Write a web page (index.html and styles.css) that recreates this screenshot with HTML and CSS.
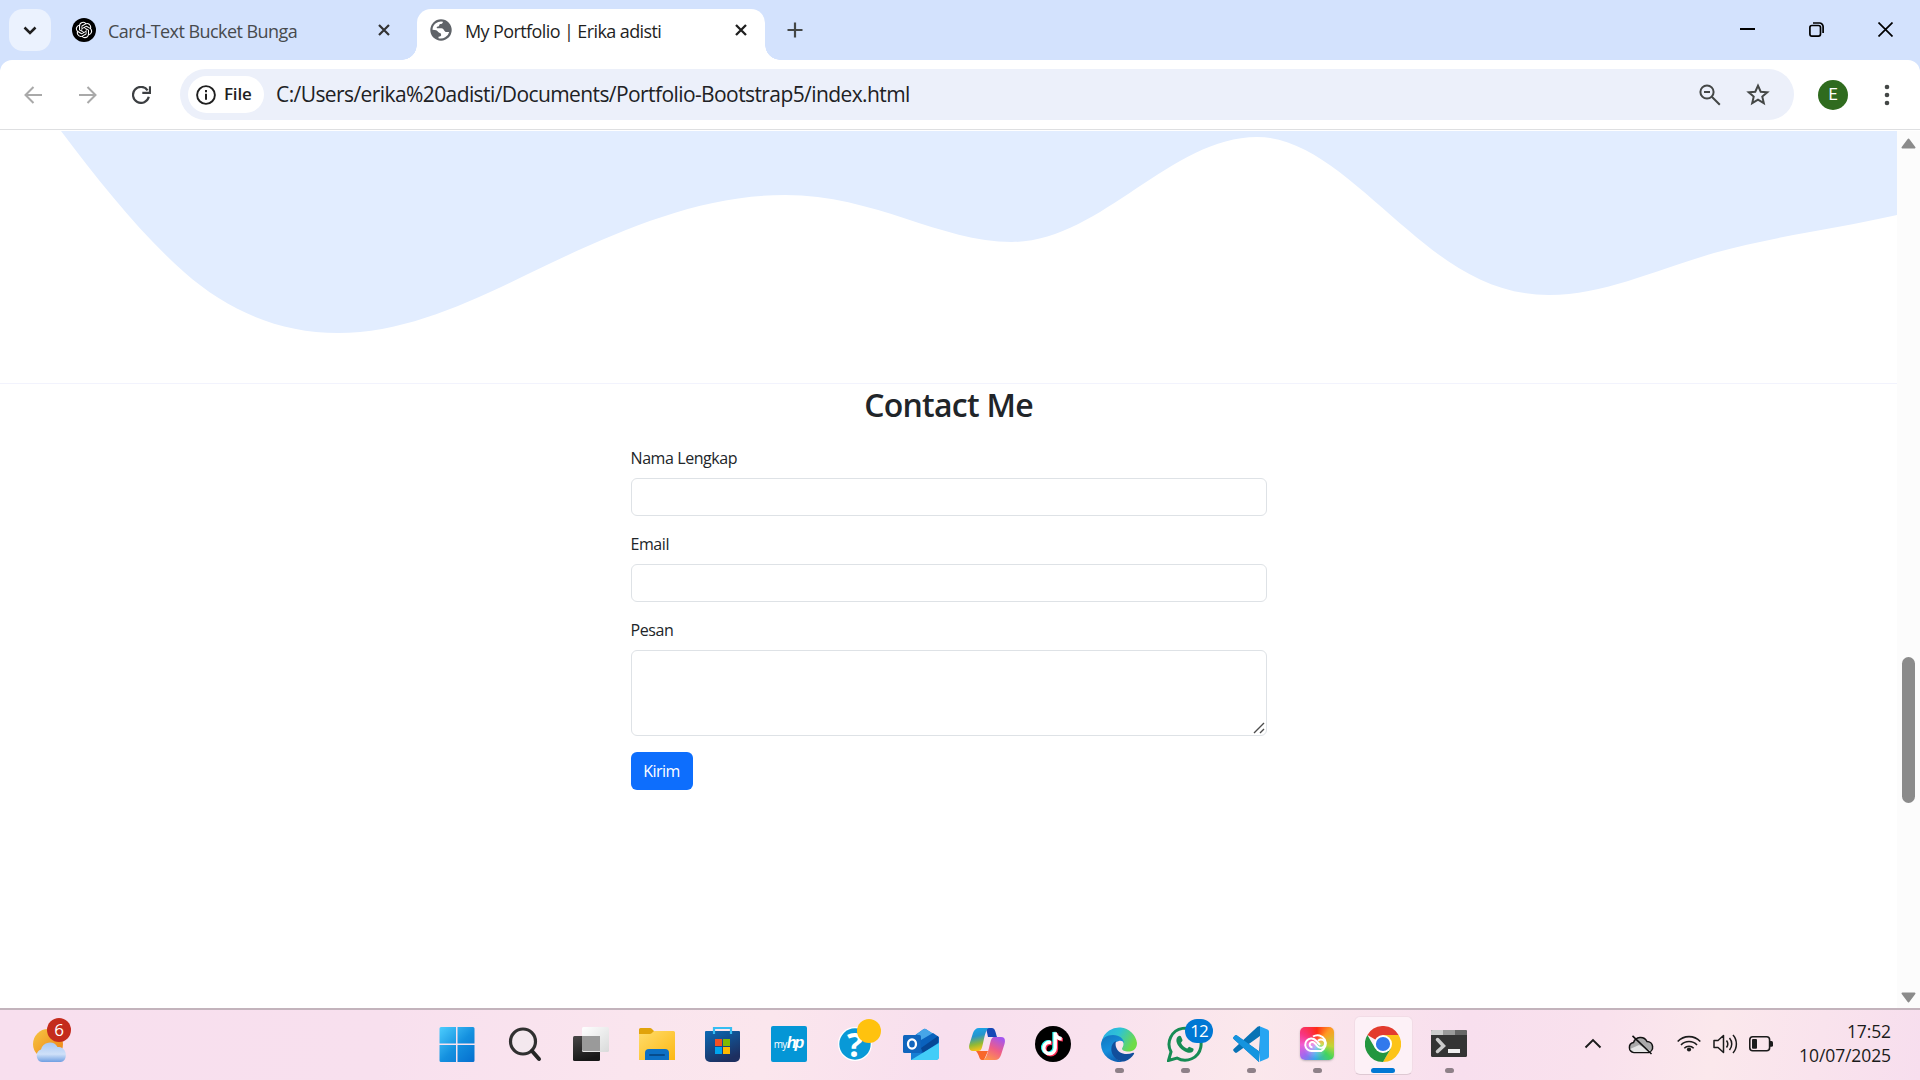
FILE: index.html
```html
<!DOCTYPE html>
<html lang="id">
<head>
<meta charset="utf-8">
<title>My Portfolio | Erika adisti</title>
<link rel="stylesheet" href="styles.css">
</head>
<body>
<div class="screen">
  <header class="tabstrip">
    <button class="tab-search" aria-label="Search tabs"><svg width="14" height="9" viewBox="0 0 14 9"><path d="M1.500 1.500 7 7l5.500-5.500" fill="none" stroke="#1f1f1f" stroke-width="2.500"/></svg></button>
    <div class="tab">
      <svg class="tab-icon" width="24" height="24" viewBox="0 0 24 24"><circle cx="12" cy="12" r="12"/><path fill="#fff" transform="translate(3.800 3.800) scale(.683)" d="M22.282 9.821a5.985 5.985 0 0 0-.516-4.910 6.046 6.046 0 0 0-6.510-2.900A6.065 6.065 0 0 0 4.981 4.180a5.985 5.985 0 0 0-3.998 2.900 6.046 6.046 0 0 0 .743 7.097 5.980 5.980 0 0 0 .510 4.911 6.051 6.051 0 0 0 6.515 2.900A5.985 5.985 0 0 0 13.260 24a6.056 6.056 0 0 0 5.772-4.206 5.990 5.990 0 0 0 3.998-2.900 6.056 6.056 0 0 0-.748-7.073zM13.260 22.430a4.476 4.476 0 0 1-2.876-1.040l.141-.081 4.779-2.758a.795.795 0 0 0 .393-.681v-6.737l2.020 1.169a.071.071 0 0 1 .038.052v5.583a4.504 4.504 0 0 1-4.495 4.494zM3.600 18.304a4.471 4.471 0 0 1-.535-3.014l.142.085 4.783 2.759a.771.771 0 0 0 .781 0l5.843-3.369v2.332a.080.080 0 0 1-.033.062L9.740 19.950a4.500 4.500 0 0 1-6.141-1.646zM2.341 7.896a4.485 4.485 0 0 1 2.366-1.973V11.600a.766.766 0 0 0 .388.677l5.815 3.354-2.021 1.169a.076.076 0 0 1-.071 0l-4.830-2.787A4.504 4.504 0 0 1 2.341 7.872zm16.597 3.855-5.833-3.388L15.119 7.200a.076.076 0 0 1 .071 0l4.830 2.791a4.494 4.494 0 0 1-.676 8.105v-5.678a.790.790 0 0 0-.407-.667zm2.011-3.023-.142-.085-4.774-2.782a.776.776 0 0 0-.785 0L9.409 9.230V6.897a.066.066 0 0 1 .028-.062l4.830-2.787a4.499 4.499 0 0 1 6.681 4.660zM8.307 12.863l-2.020-1.164a.080.080 0 0 1-.038-.057V6.074a4.499 4.499 0 0 1 7.376-3.453l-.142.081L8.704 5.460a.795.795 0 0 0-.393.681zm1.097-2.366 2.602-1.500 2.607 1.500v2.999l-2.597 1.500-2.607-1.500z"/></svg>
      <span class="tab-title title-one">Card-Text Bucket Bunga</span>
      <svg class="tab-close" width="12" height="12" viewBox="0 0 12 12"><path d="m1 1 10 10M11 1 1 11" stroke="#333" stroke-width="2.200"/></svg>
    </div>
    <div class="tab active">
      <svg class="tab-icon" width="22" height="22" viewBox="0 0 22 22"><circle cx="11" cy="11" r="10.700" fill="#5f6368"/><path fill="#fff" d="M2.500 10.800A8.600 8.600 0 0 1 13 2.700c-.2 1.600-1.200 2.300-3 2.300-.8 0-.5 2.600-2 2.600-1.500.1-1.500.8-1 1.700h4.500c2.500.2 2.400 3 4.200 3.600 1.200.4 2 0 3.500 0A8.700 8.700 0 0 1 8.500 19.300v-1.600c2.300 0 3-1 2.500-2.700-.3-1.300-2-1-2.800-2-1-1.500-2.400-2.200-5.700-2.200z"/></svg>
      <span class="tab-title title-two">My Portfolio | Erika adisti</span>
      <svg class="tab-close" width="12" height="12" viewBox="0 0 12 12"><path d="m1 1 10 10M11 1 1 11" stroke="#1f1f1f" stroke-width="2.300"/></svg>
    </div>
    <svg class="new-tab" width="16" height="16" viewBox="0 0 16 16"><path d="M8 0.500v15M.5 8h15" stroke="#444746" stroke-width="2.200"/></svg>
    <div class="window-controls">
      <svg width="15" height="15" viewBox="0 0 15 15"><path d="M0 7h15" stroke="#000" stroke-width="2"/></svg>
      <svg width="15" height="15" viewBox="0 0 15 15"><g fill="none" stroke="#000" stroke-width="1.700"><rect x=".9" y="3.500" width="10.600" height="10.600" rx="2"/><path d="M4 1h6.500a3.600 3.600 0 0 1 3.600 3.600V11"/></g></svg>
      <svg width="15" height="15" viewBox="0 0 15 15"><path d="m.5.5 14 14M14.500.5l-14 14" stroke="#000" stroke-width="1.700"/></svg>
    </div>
  </header>

  <div class="toolbar">
    <div class="nav-icons">
      <svg width="19" height="18" viewBox="0 0 19 18"><path d="M18 9H2M9.500 1 1.500 9l8 8" fill="none" stroke="#a9a9a9" stroke-width="2"/></svg>
      <svg width="19" height="18" viewBox="0 0 19 18"><path d="M1 9h16M9.500 1l8 8-8 8" fill="none" stroke="#a9a9a9" stroke-width="2"/></svg>
      <svg width="19" height="18" viewBox="0 0 19 18"><path d="M16.800 10.800A8 8 0 1 1 15.600 4.300" fill="none" stroke="#3c3f42" stroke-width="2.200"/><path d="M10.300 6.800h7.700V.2" fill="none" stroke="#3c3f42" stroke-width="2.200"/></svg>
    </div>
    <div class="address">
      <div class="chip"><svg width="20" height="20" viewBox="0 0 20 20"><circle cx="10" cy="10" r="8.900" fill="none" stroke="#1f1f1f" stroke-width="1.900"/><path d="M10 8.700v6M10 5v2.200" stroke="#1f1f1f" stroke-width="2"/></svg><span>File</span></div>
      <span class="url">C:/Users/erika%20adisti/Documents/Portfolio-Bootstrap5/index.html</span>
      <svg class="magnifier" width="22" height="22" viewBox="0 0 22 22"><g fill="none" stroke="#444746" stroke-width="2"><circle cx="8" cy="8" r="6.600"/><path d="m12.800 12.800 8 8M5 8h6"/></g></svg>
      <svg class="star" width="24" height="23" viewBox="0 0 24 23"><path d="m12 2.700 2.700 6 6.600.6-5 4.300 1.500 6.500-5.800-3.500-5.800 3.500 1.500-6.500-5-4.300 6.600-.6z" fill="none" stroke="#444746" stroke-width="2"/></svg>
    </div>
    <div class="avatar">E</div>
    <svg class="menu" width="6" height="22" viewBox="0 0 6 22"><g fill="#444746"><circle cx="3" cy="3" r="2.300"/><circle cx="3" cy="11" r="2.300"/><circle cx="3" cy="19" r="2.300"/></g></svg>
  </div>

  <main class="viewport">
    <div class="page">
      <svg class="wave" width="1897" height="252" viewBox="0 0 1897 252"><path fill="#e2edff" d="M61 0C100 52 142 104 184 141 228 180 280 202 338 202 412 202 482 165 551 132 625 97 703 64 785 64 875 64 940 111 1012 111 1100 111 1170 6 1257 6 1310 6 1358 57 1408 99 1452 137 1494 164 1549 164 1604 164 1652 140 1714 122 1775 105 1840 97 1897 84V0z"/></svg>
      <section class="contact">
        <h2>Contact Me</h2>
        <form>
          <label for="name">Nama Lengkap</label>
          <input id="name" type="text">
          <label for="email">Email</label>
          <input id="email" type="email">
          <label for="message">Pesan</label>
          <div class="message-box">
            <textarea id="message"></textarea>
            <svg class="grip" width="12" height="12" viewBox="0 0 12 12"><path d="M1 11 11 1M7 11l4-4" stroke="#4d4d4d" stroke-width="1.400"/></svg>
          </div>
          <button class="submit" type="button">Kirim</button>
        </form>
      </section>
    </div>
    <div class="scrollbar">
      <svg width="15" height="11" viewBox="0 0 15 11"><path d="M7.500 1.500 13.500 9.500h-12z" fill="#8b8b8b" stroke="#8b8b8b" stroke-width="2" stroke-linejoin="round"/></svg>
      <div class="thumb"></div>
      <svg width="15" height="11" viewBox="0 0 15 11"><path d="M7.500 9.500 13.500 1.500h-12z" fill="#8b8b8b" stroke="#8b8b8b" stroke-width="2" stroke-linejoin="round"/></svg>
    </div>
  </main>

  <footer class="taskbar">
    <div class="weather">
      <svg width="36" height="36" viewBox="0 0 36 36"><defs><linearGradient id="sun" x2="1" y2="1"><stop stop-color="#f6c744"/><stop offset="1" stop-color="#ee7c11"/></linearGradient><linearGradient id="cloud" x2="0" y2="1"><stop stop-color="#a9c9f5"/><stop offset=".6" stop-color="#cfe0f8"/><stop offset="1" stop-color="#6f9fe2"/></linearGradient></defs><circle cx="16" cy="17" r="15" fill="url(#sun)"/><path d="M10 35a6.500 6.500 0 0 1-1-12.500 9 9 0 0 1 16.500-2.500 7 7 0 0 1 8 5.500c1.200 5-1 9.500-5 9.500z" fill="url(#cloud)"/></svg>
      <span class="badge red">6</span>
    </div>
    <nav class="apps">
      <div class="app start"><svg width="36" height="36" viewBox="0 0 36 36"><defs><linearGradient id="win" gradientUnits="userSpaceOnUse" x1="0" y1="0" x2="34" y2="36"><stop stop-color="#4fd0ff"/><stop offset=".55" stop-color="#1490df"/><stop offset="1" stop-color="#0670cf"/></linearGradient></defs><path fill="url(#win)" d="M2 1h15v16.500H.5V2.500A1.500 1.500 0 0 1 2 1zM18.500 1H34a1.500 1.500 0 0 1 1.500 1.500v15h-17zM.5 19H17v17H2a1.500 1.500 0 0 1-1.500-1.500zM18.500 19h17v15.500A1.500 1.500 0 0 1 34 36H18.500z"/></svg></div>
      <div class="app"><svg width="36" height="36" viewBox="0 0 36 36"><circle cx="16" cy="15.500" r="12.500" fill="#eee" fill-opacity=".5" stroke="#303030" stroke-width="3.200"/><path d="m25 25 7 8" stroke="#252525" stroke-width="4" stroke-linecap="round"/></svg></div>
      <div class="app"><svg width="36" height="36" viewBox="0 0 36 36"><defs><linearGradient id="dark" x2=".3" y2="1"><stop stop-color="#494747"/><stop offset="1" stop-color="#171717"/></linearGradient><linearGradient id="light" x2="1" y2="1"><stop stop-color="#fff"/><stop offset="1" stop-color="#d9dada"/></linearGradient></defs><rect y="10" width="27" height="25" rx="1.500" fill="url(#dark)"/><rect x="9" y="1" width="27" height="25" rx="1.500" fill="url(#light)"/><path d="M9 10h18v15H10.500A1.500 1.500 0 0 1 9 23.500z" fill="#9a9a9a"/></svg></div>
      <div class="app"><svg width="36" height="36" viewBox="0 0 36 36"><defs><linearGradient id="folder" x2="1" y2="1"><stop stop-color="#ffdc6b"/><stop offset="1" stop-color="#fcb813"/></linearGradient></defs><path d="M0 3.500A1.500 1.500 0 0 1 1.500 2H11c1.500 0 2.500 1.500 4 3v3H0z" fill="#e1a30b"/><path d="M0 8h11c2 0 3-3 4.500-3h19A1.500 1.500 0 0 1 36 6.500V34H0z" fill="url(#folder)"/><path d="M6 34v-7a4 4 0 0 1 4-4h16a4 4 0 0 1 4 4v7z" fill="#0c70c4"/><path d="M11 29h14" stroke="#064c8c" stroke-width="2" stroke-linecap="round"/></svg></div>
      <div class="app"><svg width="36" height="36" viewBox="0 0 36 36"><defs><linearGradient id="bag" x2=".5" y2="1"><stop stop-color="#0a69b4"/><stop offset="1" stop-color="#1d2f60"/></linearGradient></defs><path d="M0 6a1 1 0 0 1 1-1h33a1 1 0 0 1 1 1v25a5 5 0 0 1-5 5H5a5 5 0 0 1-5-5z" fill="url(#bag)"/><path d="M9 8V2h17v6" fill="none" stroke="#35bdf2" stroke-width="2.200"/><path d="M10 13h7v7h-7z" fill="#f25022"/><path d="M18 13h7v7h-7z" fill="#7fba00"/><path d="M10 21h7v7h-7z" fill="#00a4ef"/><path d="M18 21h7v7h-7z" fill="#ffb900"/></svg></div>
      <div class="app"><div class="myhp">my<b>hp</b></div></div>
      <div class="app"><svg width="36" height="36" viewBox="0 0 36 36"><circle cx="18" cy="18" r="17" fill="#fff"/><circle cx="18" cy="18" r="15.700" fill="#0899d7"/></svg><span class="question">?</span><span class="dot"></span></div>
      <div class="app"><svg width="36" height="36" viewBox="0 0 36 36"><path d="m8 12 12-8.500a3 3 0 0 1 3.500 0L36 12v18a4 4 0 0 1-4 4H8z" fill="#167fd4"/><path d="m14 8 6-4.500a3 3 0 0 1 3.500 0L30 7.500 18 15z" fill="#46a5e8"/><path d="m18 14 12-7 6 4v5L20 27H18z" fill="#0a62bd"/><path d="m18 22 17-12v7L20 27z" fill="#064795"/><path d="M8 34 36 17v14a3 3 0 0 1-3 3z" fill="#42cdf8"/><rect y="9" width="18" height="18" rx="1.500" fill="#1065bd"/><ellipse cx="9" cy="18" rx="4" ry="4.700" fill="none" stroke="#fff" stroke-width="2.300"/></svg></div>
      <div class="app"><svg width="36" height="36" viewBox="0 0 36 36"><defs><linearGradient id="cp1" x2=".2" y2="1"><stop stop-color="#18a9f0"/><stop offset=".4" stop-color="#2494cc"/><stop offset=".75" stop-color="#91b935"/><stop offset="1" stop-color="#f0c21b"/></linearGradient><linearGradient id="cp2" x1=".7" x2=".2" y2="1"><stop stop-color="#a555ee"/><stop offset=".5" stop-color="#ef5e86"/><stop offset="1" stop-color="#ff9848"/></linearGradient></defs><path d="M17 2h6c3 0 3.500 4 5 9h-9z" fill="#1648b6"/><path d="M10 25h9l-4 9h-2c-3 0-2-4-6-9z" fill="#f8672b"/><path d="M10 2h10c-3 1-4 7-5.500 13-1.500 7-2 10-5 10H4c-4 0-4.500-3-3.500-7L4 7c1-3 3-5 6-5z" fill="url(#cp1)"/><path d="M26 34H14c3-1 4-5 6-12 1.500-6 2-11 5-11h7c4 0 4.500 3 3.500 7L32 29c-1 3-3 5-6 5z" fill="url(#cp2)"/></svg></div>
      <div class="app"><svg width="36" height="36" viewBox="0 0 36 36"><circle cx="18" cy="18" r="18"/><g fill="none" stroke-width="3.400"><path d="M16 16.500a5.700 5.700 0 1 0 4.200 5.500V6.500c.3 3.500 2.500 6 6.500 6.200" stroke="#25f4ee" transform="translate(-1.200 -.6)"/><path d="M16 16.500a5.700 5.700 0 1 0 4.200 5.500V6.500c.3 3.500 2.500 6 6.500 6.200" stroke="#fe2c55" transform="translate(1.200 1)"/><path d="M16 16.500a5.700 5.700 0 1 0 4.200 5.500V6.500c.3 3.500 2.500 6 6.500 6.200" stroke="#fff"/></g></svg></div>
      <div class="app"><svg width="36" height="36" viewBox="0 0 36 36"><defs><linearGradient id="e1" x2="1" y2=".4"><stop stop-color="#28a9e8"/><stop offset=".5" stop-color="#2fc3d4"/><stop offset="1" stop-color="#6edb48"/></linearGradient><linearGradient id="e2" x2=".4" y2="1"><stop stop-color="#1274be"/><stop offset=".6" stop-color="#168fdc"/><stop offset="1" stop-color="#0f64b6"/></linearGradient></defs><path d="M1 14A18 18 0 0 1 36 17c0 6-4 8.500-8.500 8.500-4 0-6.500-1.300-6.500-2.800 0-1 1.500-2 1.500-5 0-4-4-7-9-7-6 0-10 3-12.500 6z" fill="url(#e1)"/><path d="M0 18c.5-6 6-9 12-9 6.500 0 11 4 11 8.500-1-2.500-3-3-5-2.500-5 1-7 5-6 10 1 6 5 10 10 10.600A18 18 0 0 1 0 18z" fill="url(#e2)"/><path d="M15 15c-5 2-6 9-3 14s8 7.500 12 6.200c4-1.200 7-4 9-7.200.5-1-.3-1.500-1-1.200C24 30 17 27 15 21c-.6-2-.5-4.500 0-6z" fill="#114e9b"/></svg><i class="run"></i></div>
      <div class="app"><svg width="36" height="36" viewBox="0 0 36 36"><path d="m1.500 34.500 2.500-8.700A16 16 0 1 1 10 32z" fill="none" stroke="#168c54" stroke-width="3"/><path d="M11 10.500c1-1 2.500-1 3 0l1.500 3.400c.3 1-1.300 2-1.500 2.800 1.200 2.700 3.200 4.600 6 5.800.8.200 1.700-1.900 2.700-1.600l3.500 1.700c.8.500.3 2.300-.6 3.200C21 30 8 20.500 9.500 13c.2-1 .8-1.900 1.500-2.500z" fill="#168c54"/></svg><span class="badge blue">12</span><i class="run"></i></div>
      <div class="app"><svg width="36" height="36" viewBox="0 0 36 36"><path d="M27 10v16L4 9.500a1.600 1.600 0 0 0-2 0L.6 11a1.500 1.500 0 0 0 0 2L26 36V26z" fill="#167bc2"/><path d="M27 10 4 26.500a1.600 1.600 0 0 1-2 0L.6 25a1.500 1.500 0 0 1 0-2L24.500.8 27 0z" fill="#0873b5"/><path d="M.6 13 26 36l1-10L4 9.500a1.600 1.600 0 0 0-2 0L.6 11a1.500 1.500 0 0 0 0 2z" fill="#1594df"/><path d="m26 0 8.500 3.500A2.500 2.500 0 0 1 36 6v24a2.500 2.500 0 0 1-1.500 2.500L26 36c1-.5 1-1 1-2V2c0-1 0-1.500-1-2z" fill="#27a5f2"/></svg><i class="run"></i></div>
      <div class="app"><div class="creative"><svg width="34" height="33" viewBox="0 0 34 33"><g fill="none" stroke="#fff" stroke-width="2"><path d="M13 9.500A8.300 8.300 0 1 1 21 24H12a6.200 6.200 0 0 1-1-12.500c3-.3 4.500 1.300 6 3l3 3.500"/><path d="M12.500 20.300a2.700 2.700 0 1 1 1.800-4.600l3.500 4c1.800 2 6.500 1.300 7.200-2.200.8-4.500-4.300-6.500-7-3.800"/></g></svg></div><i class="run"></i></div>
      <div class="app current"><svg width="36" height="36" viewBox="0 0 36 36"><path d="M18 18 2.400 9A18 18 0 0 1 33.600 9z" fill="#e33b2e"/><path d="M18 9h15.600A18 18 0 0 1 18 36l7.800-13.500z" fill="#fcc419"/><path d="M25.800 22.500 18 36A18 18 0 0 1 2.400 9l7.800 13.500z" fill="#23963f"/><circle cx="18" cy="18" r="9" fill="#fff"/><circle cx="18" cy="18" r="7.100" fill="#3179ec"/></svg><i class="run wide"></i></div>
      <div class="app"><svg width="36" height="36" viewBox="0 0 36 36"><rect y="4" width="36" height="27" rx="1.500" fill="#343434"/><path d="M1.500 4H12v5H0V5.500A1.500 1.500 0 0 1 1.500 4z" fill="#ccc"/><path d="M12 4h12v5H12z" fill="#9a9a9a"/><path d="M24 4h10.500A1.500 1.500 0 0 1 36 5.500V9H24z" fill="#666"/><path d="m6.500 13.500 6 6.500-6 5.500" fill="none" stroke="#ccc" stroke-width="3.500" stroke-linecap="round"/><path d="M17 23h12v4H17z" fill="#eee"/></svg><i class="run"></i></div>
    </nav>
    <div class="tray">
      <svg class="chev" width="18" height="11" viewBox="0 0 18 11"><path d="M1.500 9.500 9 2l7.500 7.500" fill="none" stroke="#1b1b1b" stroke-width="1.900"/></svg>
      <svg class="cloud" width="26" height="20" viewBox="0 0 26 20"><path d="M6 17.500a5 5 0 0 1-.5-9.900A7.300 7.300 0 0 1 19 6.500a5.600 5.600 0 0 1 1.500 11z" fill="#aaa" stroke="#111" stroke-width="1.500"/><path d="m2 14 9-4 12 6-3 1H6z" fill="#e5e5e5"/><path d="M4.500.8 23.500 19" stroke="#111" stroke-width="1.600"/></svg>
      <svg class="wifi" width="24" height="18" viewBox="0 0 24 18"><g fill="none" stroke="#1b1b1b" stroke-width="1.600"><path d="M.7 7.500a15.500 15.500 0 0 1 22.600 0M4 11a11 11 0 0 1 16 0M7.300 14.300a6.500 6.500 0 0 1 9.400 0"/></g><circle cx="12" cy="15.500" r="2.100" fill="#1b1b1b"/></svg>
      <svg class="sound" width="25" height="20" viewBox="0 0 25 20"><g fill="none" stroke="#1b1b1b" stroke-width="1.500" stroke-linejoin="round"><path d="M1 6.500h4l5.500-5v17l-5.500-5H1z"/><path d="M13.500 6.500c1.500 2 1.500 5 0 7M16.500 4c3 3.500 3 8.500 0 12M20 1c4.500 5 4.500 13 0 18"/></g></svg>
      <svg class="battery" width="25" height="16" viewBox="0 0 25 16"><rect x=".8" y=".8" width="19.800" height="14" rx="3" fill="none" stroke="#1b1b1b" stroke-width="1.600"/><rect x="3" y="3" width="5" height="9.700" rx="1" fill="#1b1b1b"/><path d="M21 5h1.500A1.500 1.500 0 0 1 24 6.500v2.800a1.500 1.500 0 0 1-1.500 1.500H21z" fill="#1b1b1b"/></svg>
      <div class="clock"><span>17:52</span><span>10/07/2025</span></div>
    </div>
  </footer>
</div>
</body>
</html>
```
FILE: styles.css
```css
* { box-sizing: border-box; }
body { margin: 0; overflow: hidden; background: #fff; font-family: "Open Sans", "Noto Sans", sans-serif; color: #212529; }
svg { display: block; flex: none; }
.screen { width: 1920px; height: 1080px; display: flex; flex-direction: column; }

/* Browser tabs */
.tabstrip { height: 60px; background: #d3e2fd; display: flex; align-items: flex-start; padding: 9px 0 0 9px; }
.tab-search { width: 42px; height: 42px; padding: 0; border: 0; border-radius: 14px; background: #ebf2fe; display: flex; align-items: center; justify-content: center; }
.tab { width: 366px; height: 51px; padding: 0 27px 9px 21px; display: flex; align-items: center; color: #474a4d; white-space: nowrap; }
.tab.active { position: relative; width: 348px; padding: 0 18px 9px 13px; background: #fff; border-radius: 14px 14px 0 0; color: #1f1f1f; }
.tab.active::before, .tab.active::after { content: ""; position: absolute; bottom: 0; width: 15px; height: 15px; }
.tab.active::before { left: -15px; background: radial-gradient(circle at 0 0, transparent 14.500px, #fff 15px); }
.tab.active::after { right: -15px; background: radial-gradient(circle at 100% 0, transparent 14.500px, #fff 15px); }
.tab-title { font-size: 18px; line-height: 24px; margin-left: 12px; padding-top: 1px; }
.title-one { letter-spacing: -0.560px; }
.title-two { margin-left: 13px; letter-spacing: -0.600px; }
.tab-close { margin-left: auto; }
.new-tab { margin: 13px 0 0 22px; }
.window-controls { margin: 13px 27px 0 auto; display: flex; gap: 54px; }

/* Navigation toolbar */
.toolbar { height: 71px; background: linear-gradient(#fff, #fff) padding-box; border-bottom: 1px solid #fff; box-shadow: inset 0 -1px #dedfe1; border-radius: 12px 12px 0 0; outline: 12px solid #d3e2fd; clip-path: inset(0); display: flex; align-items: center; padding: 0 30px 0 24px; }
.nav-icons { width: 156px; display: flex; gap: 35px; }
.address { width: 1614px; height: 51px; margin-bottom: 1px; border-radius: 26px; background: #ecf0fa; display: flex; align-items: center; padding: 0 24px 0 8px; }
.chip { width: 76px; height: 37px; border-radius: 19px; background: #fff; display: flex; align-items: center; padding-left: 8px; gap: 8px; font-size: 17px; font-weight: 600; color: #1f1f1f; letter-spacing: -0.200px; }
.chip span { margin-top: -2px; }
.url { margin: -2px 0 0 12px; font-size: 21px; letter-spacing: -0.590px; color: #202124; white-space: nowrap; }
.magnifier { margin-left: auto; }
.star { margin-left: 25px; }
.avatar { width: 30px; height: 30px; margin-left: 24px; border-radius: 50%; background: #2f6b1e; color: #fff; font: 16px/30px Roboto, sans-serif; text-align: center; }
.menu { margin-left: auto; }

/* Page content */
.viewport { height: 877px; display: flex; }
.page { width: 1897px; }
.contact { border-top: 1px solid #f2f3fd; display: flex; flex-direction: column; align-items: center; }
h2 { margin: 0; padding-top: 2px; font-size: 32px; font-weight: 600; line-height: 38px; letter-spacing: -0.750px; }
form { width: 636px; display: flex; flex-direction: column; margin-top: 22px; font-size: 16px; }
label { height: 24px; line-height: 24px; letter-spacing: -0.420px; margin-bottom: 8px; }
input { height: 38px; margin: 0 0 16px; border: 1px solid #dee2e6; border-radius: 6px; padding: 6px 12px; }
.message-box { position: relative; height: 86px; margin-bottom: 16px; }
textarea { display: block; width: 100%; height: 86px; border: 1px solid #dee2e6; border-radius: 6px; resize: none; }
.grip { position: absolute; right: 2px; bottom: 2px; }
.submit { width: 62px; height: 38px; padding: 0; border: 0; border-radius: 6px; background: #0d6efd; color: #fff; font: 16px/38px "Open Sans", sans-serif; letter-spacing: -0.500px; }
.scrollbar { width: 23px; background: #fcfcfc; display: flex; flex-direction: column; align-items: center; padding: 7px 0 5px; }
.thumb { width: 13px; height: 146px; border-radius: 7px; background: #8b8b8b; margin: 508px 0 auto; }

/* Windows taskbar */
.taskbar { height: 72px; border-top: 2px solid #c3b3bc; background: linear-gradient(100deg, #f8dfee 0%, #f8e0ee 20%, #fae5ee 33%, #fbe6ed 40%, #f8dfee 49%, #f9e2ee 57%, #fbe8ec 65%, #f8dfee 76%, #f9e1ed 83%, #fbe8ec 89%, #f7deee 100%); display: flex; }
.weather { position: relative; width: 426px; padding: 17px 0 0 32px; }
.badge { position: absolute; color: #fff; height: 24px; border-radius: 12px; line-height: 24px; text-align: center; font-size: 17px; }
.red { left: 47px; top: 8px; width: 24px; background: #c42b1c; }
.blue { left: 33px; top: 9px; width: 28px; background: #0078d4; letter-spacing: -1px; }
.apps { display: flex; width: 1056px; }
.app { position: relative; width: 66px; height: 70px; padding-top: 16px; display: flex; justify-content: center; }
.start { padding-right: 4px; }
.app.current::before { content: ""; position: absolute; left: 4px; top: 6px; width: 57px; height: 57px; border-radius: 6px; background: #fdf1f7; border: 1px solid #f2dce6; border-bottom-color: #dec9d3; }
.app.current svg { position: relative; }
.run { position: absolute; bottom: 7px; left: 29px; width: 9px; height: 5px; border-radius: 3px; background: #8e8088; }
.run.wide { left: 21px; width: 24px; background: #0078d4; }
.myhp { width: 36px; height: 36px; border-radius: 2px; background: #0496d6; color: #fff; display: flex; align-items: center; justify-content: center; font-size: 10px; letter-spacing: -0.600px; }
.myhp b { font: italic 700 16px/30px "Liberation Sans", sans-serif; letter-spacing: -2px; margin-bottom: 2px; padding-right: 2px; }
.question { position: absolute; left: 24px; top: 12px; width: 18px; color: #fff; font: 700 34px/44px "Open Sans", sans-serif; text-align: center; }
.dot { position: absolute; left: 35px; top: 9px; width: 24px; height: 24px; border-radius: 50%; background: #ffc20e; }
.creative { width: 34px; height: 33px; margin-top: 1px; border-radius: 5px; overflow: hidden; background: radial-gradient(circle at 45% 60%, #ffffff70 0, transparent 45%), conic-gradient(from 0deg at 50% 50%, #ff2a16, #ff9a22 12%, #c0d638 28%, #43d45c 38%, #35a8e8 52%, #a068f0 63%, #f35cd0 74%, #f83580 84%, #ff2a16); box-shadow: 0 1px 2px #88888888; }
.tray { flex: 1; display: flex; align-items: flex-start; padding-left: 102px; }
.chev { margin-top: 28px; }
.cloud { margin: 25px 0 0 26px; }
.wifi { margin: 24px 0 0 23px; }
.sound { margin: 24px 0 0 12px; }
.battery { margin: 26px 0 0 11px; }
.clock { margin: 9px 29px 0 auto; display: flex; flex-direction: column; align-items: flex-end; color: #1b1b1b; font-size: 17.500px; line-height: 24px; letter-spacing: -0.100px; }
```
